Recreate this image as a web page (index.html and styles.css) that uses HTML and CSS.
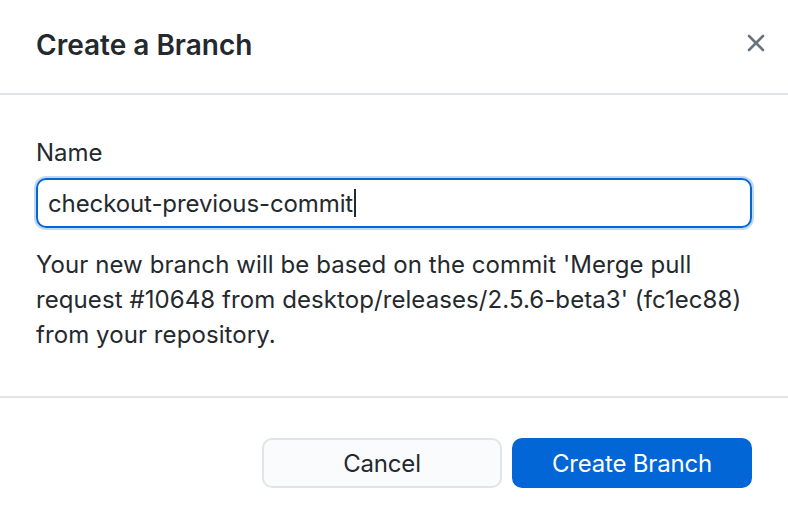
FILE: index.html
```html
<!DOCTYPE html>
<html lang="en">
<head>
<meta charset="utf-8">
<title>Create a Branch</title>
<link rel="stylesheet" href="styles.css">
</head>
<body>
<div class="dialog">
  <header class="dialog-header">
    <h1 class="dialog-title">Create a Branch</h1>
    <button class="close-btn" aria-label="Close">
      <svg width="18" height="18" viewBox="0 0 18 18"><path d="M2 2 L16 16 M16 2 L2 16" stroke="#6a737d" stroke-width="2.6" stroke-linecap="round" fill="none"/></svg>
    </button>
  </header>
  <div class="dialog-content">
    <label class="field-label">Name</label>
    <div class="text-input"><span class="input-value">checkout-previous-commit</span><span class="caret"></span></div>
    <p class="description">Your new branch will be based on the commit 'Merge pull request #10648 from desktop/releases/2.5.6-beta3' (fc1ec88) from your repository.</p>
  </div>
  <footer class="dialog-footer">
    <button class="btn btn-secondary">Cancel</button>
    <button class="btn btn-primary">Create Branch</button>
  </footer>
</div>
</body>
</html>
```

FILE: styles.css
```css
html, body {
  margin: 0;
  padding: 0;
  background: #ffffff;
}
body {
  font-family: Inter, "Noto Sans", sans-serif;
  color: #24292e;
  font-size: 24px;
}
.dialog {
  width: 788px;
  height: 518px;
  display: flex;
  flex-direction: column;
}
.dialog-header {
  height: 93px;
  border-bottom: 2px solid #e1e4e8;
  display: flex;
  align-items: center;
  justify-content: space-between;
  padding: 0 23px 0 36px;
  box-sizing: content-box;
}
.dialog-title {
  margin: 0;
  font-size: 28px;
  font-weight: 600;
  letter-spacing: 0;
  padding-bottom: 4px;
}
.close-btn {
  border: 0;
  background: transparent;
  padding: 0;
  width: 18px;
  height: 18px;
  display: flex;
  margin-bottom: 8px;
}
.dialog-content {
  padding: 44px 36px 0 36px;
  height: 257px;
  border-bottom: 2px solid #e1e4e8;
}
.field-label {
  display: block;
  font-size: 24px;
  line-height: 28px;
  margin-bottom: 11px;
}
.text-input {
  height: 46px;
  border: 2px solid #0366d6;
  border-radius: 10px;
  box-shadow: 0 0 0 2px rgba(3, 102, 214, 0.25);
  display: flex;
  align-items: center;
  padding: 0 10px;
  font-size: 24px;
}
.input-value {
  letter-spacing: -0.1px;
}
.caret {
  display: inline-block;
  width: 2px;
  height: 28px;
  background: #24292e;
  margin-left: 1px;
}
.description {
  margin: 19px 0 0 0;
  font-size: 24px;
  line-height: 35px;
  letter-spacing: 0.08px;
}
.dialog-footer {
  display: flex;
  justify-content: flex-end;
  gap: 10px;
  padding: 40px 36px 0 36px;
}
.btn {
  width: 240px;
  height: 50px;
  border-radius: 10px;
  font-family: inherit;
  font-size: 24px;
  letter-spacing: -0.2px;
}
.btn-secondary {
  background: #fafbfc;
  border: 2px solid #e1e4e8;
  color: #24292e;
}
.btn-primary {
  background: #0366d6;
  border: 2px solid #0366d6;
  color: #ffffff;
}
```
